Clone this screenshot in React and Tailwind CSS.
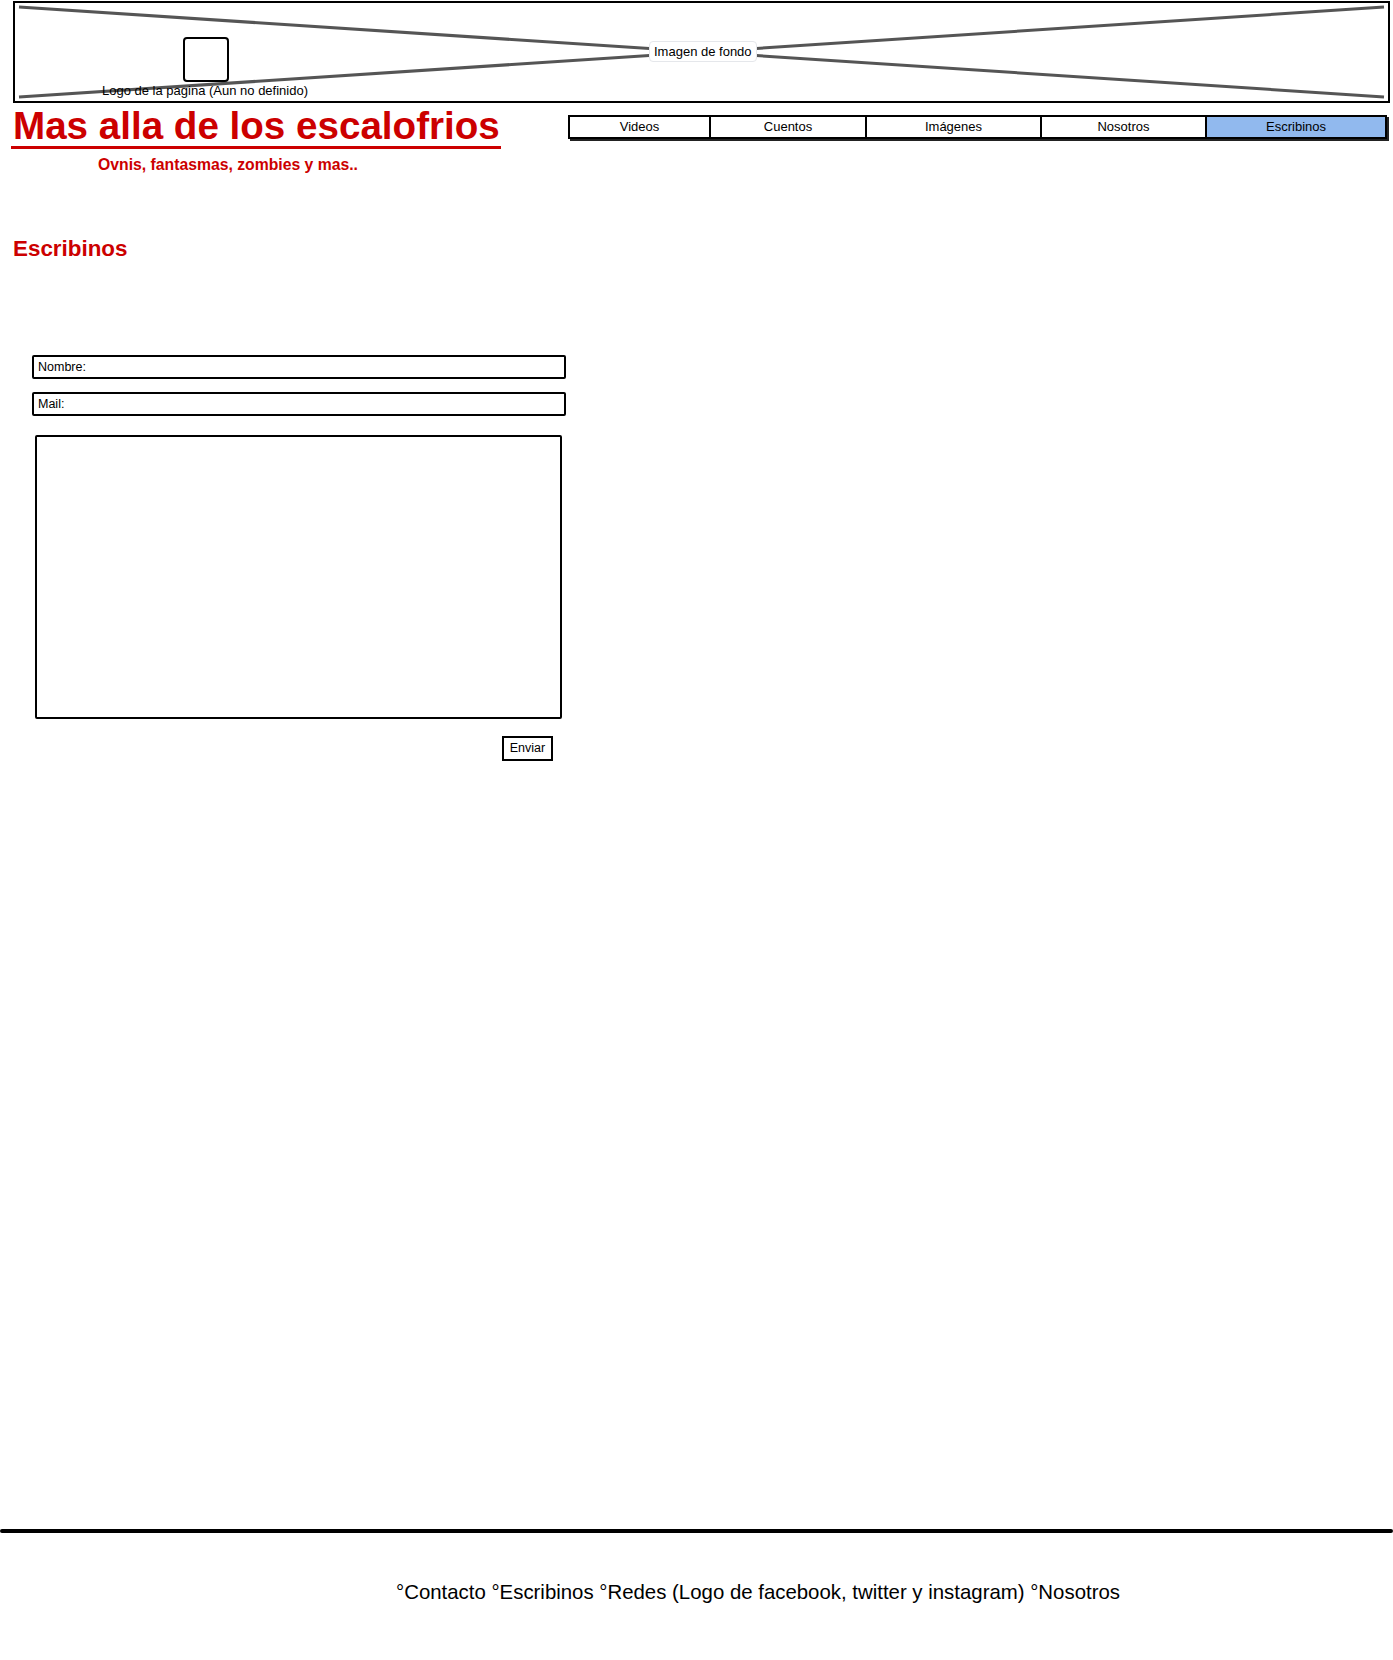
import React from 'react'

const navItems = [
  { label: 'Videos', w: 'w-[139px]' },
  { label: 'Cuentos', w: 'w-[156px]' },
  { label: 'Imágenes', w: 'w-[175px]' },
  { label: 'Nosotros', w: 'w-[165px]' },
  { label: 'Escribinos', w: 'flex-1', active: true },
]

export default function App() {
  return (
    <div className="w-[1393px] min-h-[1660px] bg-white text-black flex flex-col font-['Liberation_Sans',Arial,sans-serif]">
      {/* Header */}
      <header className="pl-[13px] pt-[1px]">
        {/* Imagen de fondo placeholder */}
        <div className="relative w-[1377px] h-[102px] border-2 border-black">
          <svg className="absolute inset-0 w-full h-full" viewBox="0 0 1373 98" preserveAspectRatio="none">
            <line x1="4" y1="4" x2="1369" y2="94" stroke="#555" strokeWidth="3" />
            <line x1="4" y1="94" x2="1369" y2="4" stroke="#555" strokeWidth="3" />
          </svg>
          <div className="absolute left-[634px] top-[38px] h-[21px] px-[4px] flex items-center bg-white border border-gray-200 rounded-[4px] text-[13px]">
            Imagen de fondo
          </div>
          <div className="absolute left-[168px] top-[34px] w-[46px] h-[45px] border-2 border-black rounded-[4px] bg-white" />
          <div className="absolute left-[87px] top-[80px] text-[13px] leading-[16px]">
            Logo de la pagina (Aun no definido)
          </div>
        </div>

        <div className="flex">
          <div className="w-[555px]">
            <h1 className="mt-[5px] text-[38.6px] leading-[36px] font-bold text-[#cc0000] whitespace-nowrap">
              Mas alla de los escalofrios
            </h1>
            <div className="-ml-[2px] mt-[2px] w-[490px] h-[3px] bg-[#cc0000]" />
            <p className="ml-[85px] mt-[6px] text-[15.75px] leading-[20px] font-bold text-[#cc0000]">
              Ovnis, fantasmas, zombies y mas..
            </p>
          </div>

          <nav className="mt-[12px] w-[819px] h-[24px] flex border-2 border-black shadow-[2px_2px_0_#222] text-[13px]">
            {navItems.map((item, i) => (
              <div
                key={item.label}
                className={`${item.w} flex items-center justify-center ${i > 0 ? 'border-l-2 border-black' : ''} ${item.active ? 'bg-[#91b9ee]' : 'bg-white'}`}
              >
                {item.label}
              </div>
            ))}
          </nav>
        </div>
      </header>

      {/* Contenido */}
      <main>
        <h2 className="ml-[13px] mt-[60px] text-[22.4px] leading-[28px] font-bold text-[#cc0000]">Escribinos</h2>

        <form className="ml-[32px] mt-[92px] w-[534px]">
          <div className="h-[24px] border-2 border-black rounded-[2px] flex items-center pl-[4px] text-[12.5px]">Nombre:</div>
          <div className="mt-[13px] h-[24px] border-2 border-black rounded-[2px] flex items-center pl-[4px] text-[12.5px]">Mail:</div>
          <div className="ml-[3px] mt-[19px] w-[527px] h-[284px] border-2 border-black rounded-[2px]" />
          <div className="ml-[470px] mt-[17px] w-[51px] h-[25px] border-2 border-black flex items-center justify-center text-[12.5px]">
            Enviar
          </div>
        </form>
      </main>

      {/* Footer */}
      <footer className="mt-auto">
        <div className="h-[4px] bg-black rounded-full" />
        <p className="pl-[396px] mt-[47px] pb-[56px] text-[20.4px] leading-[24px]">
          °Contacto °Escribinos °Redes (Logo de facebook, twitter y instagram) °Nosotros
        </p>
      </footer>
    </div>
  )
}
